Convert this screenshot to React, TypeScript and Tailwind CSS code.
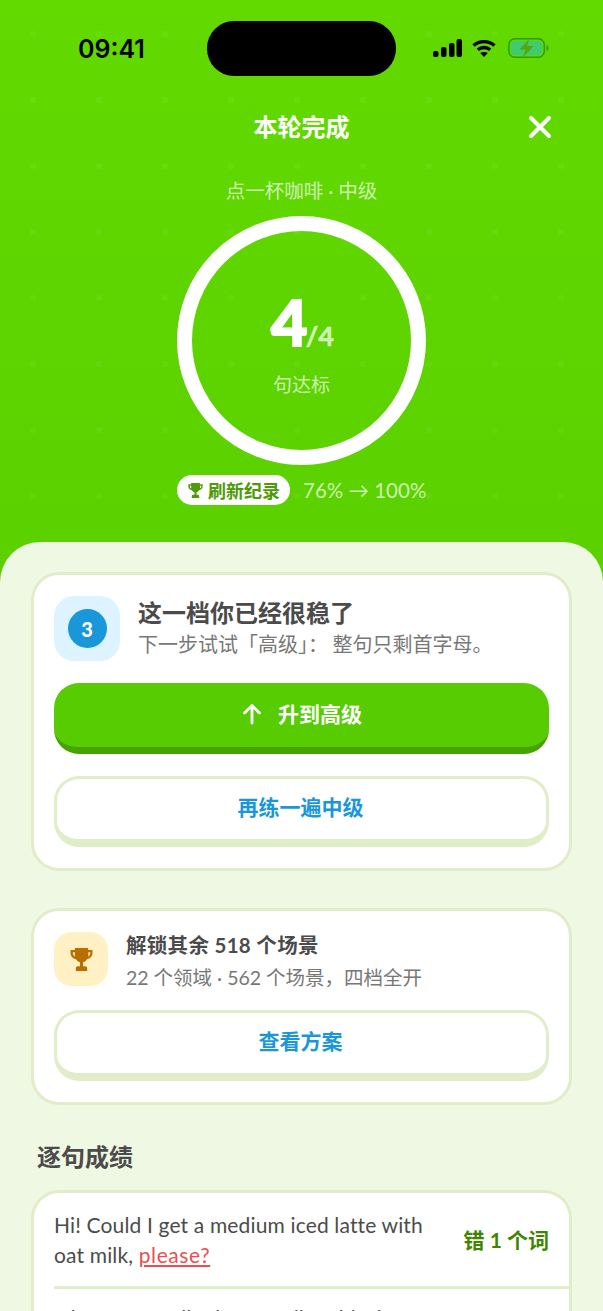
import React from 'react';

const CJK = "font-['Noto_Sans_CJK_SC',sans-serif]";

function Trophy({ className }: { className?: string }) {
  return (
    <svg viewBox="0 0 24 24" className={className} fill="currentColor" aria-hidden="true">
      <path d="M6.500 2.500h11v1.600h3.600v2.600c0 2.600-1.900 4.700-4.500 5-.8 1.300-2 2.200-3.300 2.500v3.300h1.700c1 0 1.700.7 1.700 1.700v2.300H7.300v-2.300c0-1 .7-1.700 1.700-1.700h1.700v-3.300c-1.300-.3-2.500-1.200-3.300-2.500-2.600-.3-4.500-2.400-4.500-5V4.100h3.600V2.500zm-1.600 3.400v.8c0 1.300.7 2.400 1.800 2.900-.1-.6-.2-1.200-.2-1.800V5.900H4.900zm12.800 0v1.900c0 .6-.1 1.200-.2 1.800 1.100-.5 1.800-1.600 1.800-2.900v-.8h-1.600z" fillRule="evenodd" />
    </svg>
  );
}

function StatusBar() {
  return (
    <div className="flex items-start pt-[21px] h-[76px]">
      <div className="w-[207px] pl-[78px] pt-[14px] font-['Inter',sans-serif] text-[25px] leading-[28px] font-semibold text-black">09:41</div>
      <div className="w-[189px] h-[55px] rounded-[27px] bg-black" />
      <div className="flex items-start gap-[10px] pl-[37px] pt-[18px]">
        <svg width="29" height="18" viewBox="0 0 29 18" fill="#000" aria-hidden="true">
          <rect x="0" y="12" width="5.500" height="6" rx="2" />
          <rect x="8" y="8" width="5.500" height="10" rx="2" />
          <rect x="16" y="4" width="5.500" height="14" rx="2" />
          <rect x="23.500" y="0" width="5.500" height="18" rx="2" />
        </svg>
        <svg width="24" height="18" viewBox="0 0 24 18" fill="none" stroke="#000" strokeWidth="3.300" aria-hidden="true">
          <path d="M1.500 6.500c5.800-5.300 15.200-5.300 21 0" />
          <path d="M5.800 10.800c3.500-3.100 8.900-3.100 12.400 0" />
          <path d="M12 18l-3.800-4c2.200-1.500 5.400-1.500 7.600 0z" fill="#000" stroke="none" />
        </svg>
        <svg className="ml-[2px] -mt-[1px]" width="41" height="20" viewBox="0 0 41 20" aria-hidden="true">
          <rect x="0.800" y="0.800" width="35.500" height="18.400" rx="6" fill="none" stroke="#2f9a14" strokeWidth="1.500" />
          <rect x="3" y="3" width="31" height="14" rx="4" fill="#3fcb70" />
          <path d="M38.500 7c1.300.4 2 1.500 2 3s-.7 2.600-2 3z" fill="#2f9a14" />
          <path d="M21.500 0.500l-10 11h6l-2.500 8 10.500-11.500h-6.500z" fill="#5aa50a" />
        </svg>
      </div>
    </div>
  );
}

function Ring() {
  return (
    <div className="mx-auto w-[249px] h-[249px] rounded-full border-[15px] border-white flex flex-col items-center">
      <div className="mt-[57px] pl-[2px] flex items-baseline font-['Lato',sans-serif] text-white leading-none">
        <span className="text-[63px] leading-[68px] font-black [-webkit-text-stroke:2px_white]">4</span>
        <span className="-ml-[2px] text-[27px] font-bold text-white/70 [-webkit-text-stroke:0.5px_rgba(255,255,255,0.7)]">/4</span>
      </div>
      <div className={`mt-[14px] text-[19px] leading-[28px] text-white/70 ${CJK}`}>句达标</div>
    </div>
  );
}

function PlainButton({ label }: { label: string }) {
  return (
    <button className={`w-full h-[71px] pb-[4px] pr-[2px] rounded-[25px] bg-white border-[3px] border-b-[8px] border-[#e0edc8] text-[21px] font-bold text-[#1a97d9] ${CJK}`}>
      {label}
    </button>
  );
}

export default function App() {
  return (
    <div className="relative h-[1311px] w-[603px] overflow-hidden bg-[#eff8e2]">
      {/* green backdrop with faint dots, runs under the sheet corners */}
      <div className="absolute inset-x-0 top-0 h-[600px] bg-[linear-gradient(180deg,#62da00_0%,#5ad000_100%)]">
        <div className="h-full bg-[radial-gradient(circle,rgba(255,255,255,0.05)_3px,transparent_3.500px)] bg-[length:66px_66px] bg-[position:0px_1px]" />
      </div>

      <div className="relative">
        <StatusBar />

        <header className="relative h-[102px] pt-[34px] text-center">
          <h1 className={`-mt-[1px] text-[24px] leading-[34px] font-bold text-white ${CJK}`}>本轮完成</h1>
          <svg className="absolute right-[51px] top-[39px]" width="24" height="24" viewBox="0 0 24 24" fill="none" stroke="#fff" strokeWidth="4" strokeLinecap="round" aria-hidden="true">
            <path d="M3 3l18 18M21 3L3 21" />
          </svg>
          <p className="mt-[34px] font-['Lato','Noto_Sans_CJK_SC',sans-serif] text-[19.500px] leading-[28px] text-white/70">点一杯咖啡 · 中级</p>
        </header>

        <div className="pt-[38px]">
          <Ring />
        </div>

        <div className="mt-[10px] ml-[177px] flex items-center h-[30px]">
          <div className={`flex items-center gap-[3px] h-[30px] w-[113px] pl-[9px] rounded-full bg-white text-[#4f9a08] text-[18px] font-bold ${CJK}`}>
            <Trophy className="w-[19px] h-[19px]" />
            刷新纪录
          </div>
          <div className="ml-[13px] font-['Lato',sans-serif] text-[20.500px] text-white/70 whitespace-nowrap">76% → 100%</div>
        </div>

        {/* sheet */}
        <main className="mt-[37px] h-[769px] rounded-t-[40px] bg-[#eff8e2] px-[31px] pt-[30px]">
          <section className="rounded-[28px] border-[3px] border-[#e0edc8] bg-white px-[20px] pt-[21px] h-[299px]">
            <div className="flex items-center gap-[18px]">
              <div className="w-[66px] h-[65px] rounded-[20px] bg-[#ddf3ff] flex items-center justify-center">
                <div className="w-[39px] h-[39px] rounded-full bg-[#1a97d9] flex items-center justify-center font-['Lato',sans-serif] text-[20px] font-black text-white">3</div>
              </div>
              <div className={`min-w-0 ${CJK}`}>
                <h2 className="-mt-[1px] text-[24px] leading-[32px] font-bold text-[#4b4b4b]">这一档你已经很稳了</h2>
                <p className="text-[20px] leading-[32px] text-[#777] whitespace-nowrap">下一步试试「高级」： 整句只剩首字母。</p>
              </div>
            </div>

            <button className={`mt-[22px] w-full h-[71px] pb-[3px] pl-[1px] rounded-[25px] bg-[#58cc02] border-b-[7px] border-[#46a302] flex items-center justify-center gap-[16px] text-[21px] font-bold text-white ${CJK}`}>
              <svg width="20" height="22" viewBox="0 0 20 22" fill="none" stroke="#fff" strokeWidth="2.800" strokeLinecap="round" strokeLinejoin="round" aria-hidden="true">
                <path d="M10 20V3M2.500 10L10 2.500l7.500 7.500" />
              </svg>
              升到高级
            </button>

            <div className="mt-[22px]">
              <PlainButton label="再练一遍中级" />
            </div>
          </section>

          <section className="mt-[37px] rounded-[28px] border-[3px] border-[#e0edc8] bg-white px-[20px] pt-[21px] h-[197px]">
            <div className="flex items-start gap-[18px]">
              <div className="w-[54px] h-[54px] rounded-[18px] bg-[#fff1c4] flex items-center justify-center text-[#b86f00]">
                <Trophy className="w-[29px] h-[29px]" />
              </div>
              <div className="font-['Lato','Noto_Sans_CJK_SC',sans-serif] min-w-0 -mt-[2px]">
                <h3 className="text-[20.500px] leading-[30px] font-bold text-[#4b4b4b] tracking-[0.3px]">解锁其余 518 个场景</h3>
                <p className="mt-[3px] text-[19.500px] leading-[30px] text-[#777] whitespace-nowrap">22 个领域 · 562 个场景，四档全开</p>
              </div>
            </div>
            <div className="mt-[17px]">
              <PlainButton label="查看方案" />
            </div>
          </section>

          <h2 className={`mt-[34px] pl-[6px] text-[24px] leading-[34px] font-bold text-[#4b4b4b] ${CJK}`}>逐句成绩</h2>

          <section className="mt-[17px] rounded-t-[28px] border-[3px] border-b-0 border-[#e0edc8] bg-white pl-[20px]">
            <div className="flex items-center h-[96px] pr-[20px] border-b-[3px] border-[#e0edc8]">
              <p className="flex-1 font-['Lato',sans-serif] text-[21px] leading-[30px] tracking-[0.15px] text-[#4b4b4b]">
                Hi! Could I get a medium iced latte with oat milk, <span className="text-[#ea4f4f] underline tracking-[0.6px]">please?</span>
              </p>
              <span className="ml-[24px] font-['Lato','Noto_Sans_CJK_SC',sans-serif] text-[21px] font-bold text-[#3f8600] whitespace-nowrap">错 1 个词</span>
            </div>
            <p className="pt-[14px] font-['Lato',sans-serif] text-[21px] leading-[30px] tracking-[0.15px] text-[#4b4b4b] whitespace-nowrap">Oh, perfect, I'll take a medium black coffee</p>
          </section>
        </main>
      </div>
    </div>
  );
}
